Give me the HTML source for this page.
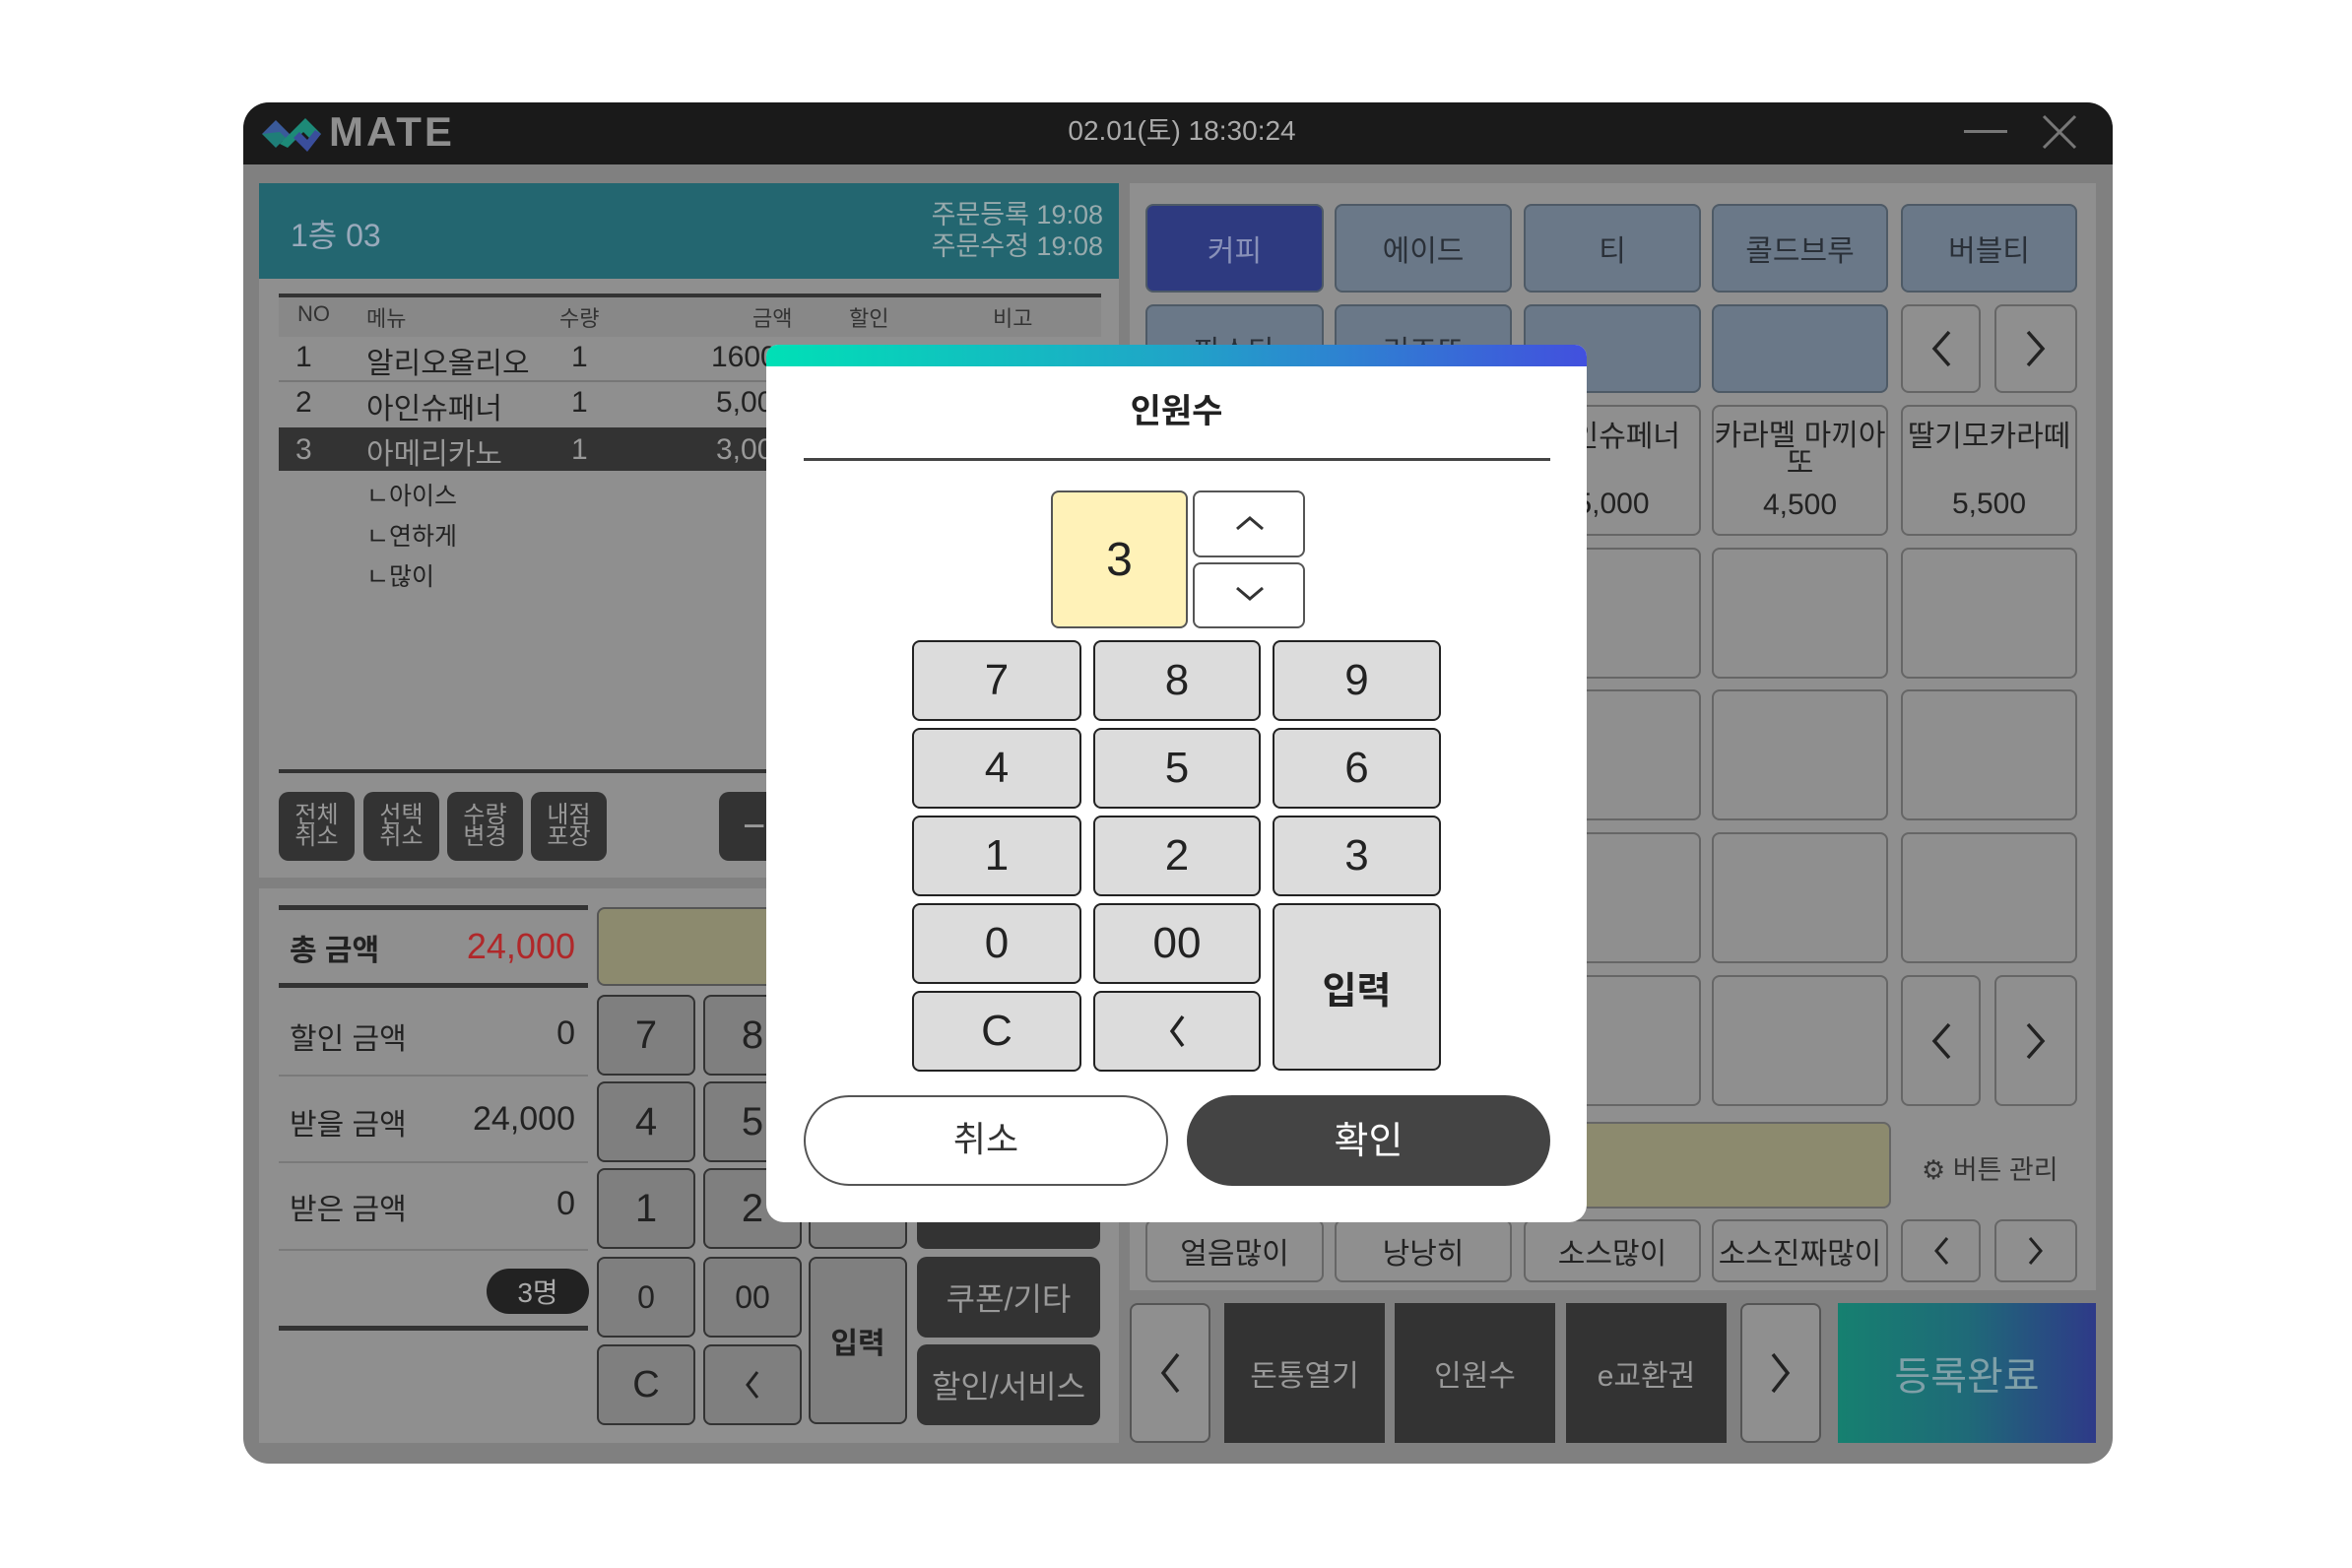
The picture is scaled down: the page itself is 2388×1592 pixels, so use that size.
<!DOCTYPE html>
<html><head><meta charset="utf-8"><style>
*{margin:0;padding:0;box-sizing:border-box}
body{width:2388px;height:1592px;background:#fff;position:relative;overflow:hidden;font-family:"Liberation Sans","Noto Sans CJK KR",sans-serif}
.a{position:absolute}
.c{display:flex;align-items:center;justify-content:center;text-align:center}
.cat{background:#6a7888;border:2px solid #4e5a66;border-radius:8px;color:#2a3038;font-size:30px}
.menu{background:#8f8f8f;border:2px solid #666;border-radius:8px;color:#222;font-size:30px}
.lk{background:#7f7f7f;border:2px solid #333;border-radius:8px;color:#222;font-size:40px}
.dk{background:#333;border-radius:10px;color:#999;font-size:32px}
.pk{background:#dcdcdc;border:2px solid #222;border-radius:8px;color:#222;font-size:44px}
.row{font-size:30px;color:#222}
.sum{font-size:30px;color:#222}
</style></head><body>
<div class="a" style="left:247px;top:104px;width:1898px;height:1382px;background:#808080;border-radius:26px;overflow:hidden">
 <div class="a" style="left:0;top:0;width:1898px;height:63px;background:#1a1a1a"></div>
</div>
<svg class="a" style="left:262px;top:113px" width="68" height="46" viewBox="0 0 68 46">
 <path d="M4 23 L18 9 L34 25 L28 31 Z" fill="#3a5a9a"/>
 <path d="M4 23 L18 37 L28 27 L22 21 Z" fill="#1f7e78"/>
 <path d="M22 33 L48 7 L64 23 L56 31 L46 21 L30 37 Z" fill="#1d8a78"/>
 <path d="M36 27 L50 41 L64 23 L58 19 L50 29 L42 21 Z" fill="#3a4e9c"/>
</svg>
<div class="a" style="left:334px;top:106px;font-size:42px;font-weight:bold;color:#8e8e8e;letter-spacing:3px;line-height:56px">MATE</div>
<div class="a" style="left:1000px;top:113px;width:400px;text-align:center;font-size:28px;color:#aaa;line-height:40px">02.01(토) 18:30:24</div>
<div class="a" style="left:1994px;top:132px;width:44px;height:3px;background:#777"></div>
<svg class="a" style="left:2072px;top:115px" width="38" height="38"><path d="M3 3L35 35M35 3L3 35" stroke="#777" stroke-width="3"/></svg>

<div class="a" style="left:263px;top:186px;width:873px;height:705px;background:#8f8f8f"></div>
<div class="a" style="left:263px;top:186px;width:873px;height:97px;background:#236670"></div>
<div class="a" style="left:295px;top:214px;font-size:32px;color:#9ab">1층 03</div>
<div class="a" style="left:880px;top:202px;width:240px;text-align:right;font-size:27px;color:#98aaad;line-height:32px">주문등록 19:08<br>주문수정 19:08</div>
<div class="a" style="left:283px;top:298px;width:835px;height:44px;background:#888;border-top:4px solid #333"></div>
<div class="a" style="left:302px;top:306px;font-size:22px;color:#333">NO</div>
<div class="a" style="left:372px;top:306px;font-size:22px;color:#333">메뉴</div>
<div class="a" style="left:568px;top:306px;font-size:22px;color:#333">수량</div>
<div class="a" style="left:764px;top:306px;font-size:22px;color:#333">금액</div>
<div class="a" style="left:862px;top:306px;font-size:22px;color:#333">할인</div>
<div class="a" style="left:1008px;top:306px;font-size:22px;color:#333">비고</div>
<div class="a" style="left:283px;top:386px;width:835px;height:2px;background:#777"></div>
<div class="a" style="left:283px;top:434px;width:835px;height:44px;background:#333"></div>
<div class="a row" style="left:300px;top:346px">1</div><div class="a row" style="left:372px;top:344px">알리오올리오</div><div class="a row" style="left:580px;top:346px">1</div><div class="a row" style="left:722px;top:346px">1600</div>
<div class="a row" style="left:300px;top:392px">2</div><div class="a row" style="left:372px;top:390px">아인슈패너</div><div class="a row" style="left:580px;top:392px">1</div><div class="a row" style="left:727px;top:392px">5,000</div>
<div class="a row" style="left:300px;top:440px;color:#999">3</div><div class="a row" style="left:372px;top:436px;color:#999">아메리카노</div><div class="a row" style="left:580px;top:440px;color:#999">1</div><div class="a row" style="left:727px;top:440px;color:#999">3,000</div>
<div class="a" style="left:372px;top:484px;font-size:25px;color:#222;line-height:41px">ㄴ아이스<br>ㄴ연하게<br>ㄴ많이</div>
<div class="a" style="left:283px;top:781px;width:835px;height:4px;background:#333"></div>
<div class="a dk c" style="left:283px;top:804px;width:77px;height:70px;font-size:24px;line-height:22px">전체<br>취소</div>
<div class="a dk c" style="left:369px;top:804px;width:77px;height:70px;font-size:24px;line-height:22px">선택<br>취소</div>
<div class="a dk c" style="left:454px;top:804px;width:77px;height:70px;font-size:24px;line-height:22px">수량<br>변경</div>
<div class="a dk c" style="left:539px;top:804px;width:77px;height:70px;font-size:24px;line-height:22px">내점<br>포장</div>
<div class="a dk c" style="left:730px;top:804px;width:100px;height:70px;font-size:40px;justify-content:flex-start;padding-left:24px">−</div>

<div class="a" style="left:263px;top:902px;width:873px;height:563px;background:#8f8f8f"></div>
<div class="a" style="left:283px;top:919px;width:314px;height:5px;background:#333"></div>
<div class="a" style="left:283px;top:998px;width:314px;height:5px;background:#333"></div>
<div class="a sum" style="left:294px;top:940px;font-weight:bold">총 금액</div>
<div class="a" style="left:420px;top:940px;width:164px;text-align:right;font-size:36px;color:#b0282a">24,000</div>
<div class="a sum" style="left:294px;top:1030px">할인 금액</div><div class="a" style="left:484px;top:1030px;width:100px;text-align:right;font-size:34px;color:#222">0</div>
<div class="a" style="left:283px;top:1091px;width:314px;height:2px;background:#7a7a7a"></div>
<div class="a sum" style="left:294px;top:1117px">받을 금액</div><div class="a" style="left:420px;top:1117px;width:164px;text-align:right;font-size:34px;color:#222">24,000</div>
<div class="a" style="left:283px;top:1179px;width:314px;height:2px;background:#7a7a7a"></div>
<div class="a sum" style="left:294px;top:1203px">받은 금액</div><div class="a" style="left:484px;top:1203px;width:100px;text-align:right;font-size:34px;color:#222">0</div>
<div class="a" style="left:283px;top:1268px;width:314px;height:2px;background:#7a7a7a"></div>
<div class="a c" style="left:494px;top:1288px;width:104px;height:46px;border-radius:23px;background:#222;color:#aaa;font-size:28px">3명</div>
<div class="a" style="left:283px;top:1346px;width:314px;height:5px;background:#333"></div>
<div class="a" style="left:606px;top:921px;width:230px;height:80px;background:#8c8a6e;border:2px solid #555;border-radius:8px"></div>
<div class="a lk c" style="left:606px;top:1010px;width:100px;height:82px">7</div>
<div class="a lk c" style="left:714px;top:1010px;width:100px;height:82px">8</div>
<div class="a lk c" style="left:606px;top:1098px;width:100px;height:82px">4</div>
<div class="a lk c" style="left:714px;top:1098px;width:100px;height:82px">5</div>
<div class="a lk c" style="left:606px;top:1186px;width:100px;height:82px">1</div>
<div class="a lk c" style="left:714px;top:1186px;width:100px;height:82px">2</div>
<div class="a lk c" style="left:821px;top:1186px;width:100px;height:82px"></div>
<div class="a lk c" style="left:606px;top:1276px;width:100px;height:82px;font-size:32px">0</div>
<div class="a lk c" style="left:714px;top:1276px;width:100px;height:82px;font-size:32px">00</div>
<div class="a lk c" style="left:821px;top:1276px;width:100px;height:170px;font-size:30px;font-weight:bold">입력</div>
<div class="a lk c" style="left:606px;top:1365px;width:100px;height:82px;font-size:38px">C</div>
<div class="a lk c" style="left:714px;top:1365px;width:100px;height:82px"><svg width="16" height="30"><path d="M13 2L3 15L13 28" stroke="#222" stroke-width="3" fill="none"/></svg></div>
<div class="a dk c" style="left:931px;top:1186px;width:186px;height:82px"></div>
<div class="a dk c" style="left:931px;top:1276px;width:186px;height:82px">쿠폰/기타</div>
<div class="a dk c" style="left:931px;top:1365px;width:186px;height:82px">할인/서비스</div>

<div class="a" style="left:1147px;top:186px;width:981px;height:1124px;background:#8f8f8f"></div>
<div class="a cat c" style="left:1163px;top:207px;width:181px;height:90px;background:#2e3a80;color:#8890b8">커피</div>
<div class="a cat c" style="left:1355px;top:207px;width:180px;height:90px">에이드</div>
<div class="a cat c" style="left:1547px;top:207px;width:180px;height:90px">티</div>
<div class="a cat c" style="left:1738px;top:207px;width:179px;height:90px">콜드브루</div>
<div class="a cat c" style="left:1930px;top:207px;width:179px;height:90px">버블티</div>
<div class="a cat c" style="left:1163px;top:309px;width:181px;height:90px">파스타</div>
<div class="a cat c" style="left:1355px;top:309px;width:180px;height:90px">리조또</div>
<div class="a cat" style="left:1547px;top:309px;width:180px;height:90px"></div>
<div class="a cat" style="left:1738px;top:309px;width:179px;height:90px"></div>
<div class="a menu c" style="left:1930px;top:309px;width:81px;height:90px"><svg width="22" height="40"><path d="M19 3L4 20L19 37" stroke="#222" stroke-width="3.5" fill="none"/></svg></div>
<div class="a menu c" style="left:2025px;top:309px;width:84px;height:90px"><svg width="22" height="40"><path d="M3 3L18 20L3 37" stroke="#222" stroke-width="3.5" fill="none"/></svg></div>
<div class="a menu c" style="left:1547px;top:411px;width:180px;height:133px;flex-direction:column;line-height:34px">아인슈페너<br><br>5,000</div>
<div class="a menu c" style="left:1738px;top:411px;width:179px;height:133px;flex-direction:column;line-height:28px">카라멜 마끼아<br>또<div style="margin-top:14px">4,500</div></div>
<div class="a menu c" style="left:1930px;top:411px;width:179px;height:133px;line-height:34px">딸기모카라떼<br><br>5,500</div>
<div class="a menu" style="left:1547px;top:556px;width:180px;height:133px"></div>
<div class="a menu" style="left:1738px;top:556px;width:179px;height:133px"></div>
<div class="a menu" style="left:1930px;top:556px;width:179px;height:133px"></div>
<div class="a menu" style="left:1547px;top:700px;width:180px;height:133px"></div>
<div class="a menu" style="left:1738px;top:700px;width:179px;height:133px"></div>
<div class="a menu" style="left:1930px;top:700px;width:179px;height:133px"></div>
<div class="a menu" style="left:1547px;top:845px;width:180px;height:133px"></div>
<div class="a menu" style="left:1738px;top:845px;width:179px;height:133px"></div>
<div class="a menu" style="left:1930px;top:845px;width:179px;height:133px"></div>
<div class="a menu" style="left:1547px;top:990px;width:180px;height:133px"></div>
<div class="a menu" style="left:1738px;top:990px;width:179px;height:133px"></div>
<div class="a menu c" style="left:1930px;top:990px;width:81px;height:133px"><svg width="22" height="40"><path d="M19 3L4 20L19 37" stroke="#222" stroke-width="3.5" fill="none"/></svg></div>
<div class="a menu c" style="left:2025px;top:990px;width:84px;height:133px"><svg width="22" height="40"><path d="M3 3L18 20L3 37" stroke="#222" stroke-width="3.5" fill="none"/></svg></div>
<div class="a" style="left:1400px;top:1139px;width:520px;height:88px;background:#8c8a6e;border:2px solid #666;border-radius:8px"></div>
<div class="a" style="left:1951px;top:1166px;font-size:27px;color:#333">⚙ 버튼 관리</div>
<div class="a menu c" style="left:1163px;top:1238px;width:181px;height:64px">얼음많이</div>
<div class="a menu c" style="left:1355px;top:1238px;width:180px;height:64px">낭낭히</div>
<div class="a menu c" style="left:1547px;top:1238px;width:180px;height:64px">소스많이</div>
<div class="a menu c" style="left:1738px;top:1238px;width:179px;height:64px">소스진짜많이</div>
<div class="a menu c" style="left:1930px;top:1238px;width:81px;height:64px"><svg width="18" height="30"><path d="M15 2L4 15L15 28" stroke="#222" stroke-width="3" fill="none"/></svg></div>
<div class="a menu c" style="left:2025px;top:1238px;width:84px;height:64px"><svg width="18" height="30"><path d="M3 2L14 15L3 28" stroke="#222" stroke-width="3" fill="none"/></svg></div>
<div class="a menu c" style="left:1147px;top:1323px;width:82px;height:142px;border-color:#555"><svg width="22" height="44"><path d="M19 3L4 22L19 41" stroke="#222" stroke-width="3.5" fill="none"/></svg></div>
<div class="a c" style="left:1243px;top:1323px;width:163px;height:142px;background:#333;color:#999;font-size:30px">돈통열기</div>
<div class="a c" style="left:1416px;top:1323px;width:163px;height:142px;background:#333;color:#999;font-size:30px">인원수</div>
<div class="a c" style="left:1590px;top:1323px;width:163px;height:142px;background:#333;color:#999;font-size:30px">e교환권</div>
<div class="a menu c" style="left:1767px;top:1323px;width:82px;height:142px;border-color:#555"><svg width="22" height="44"><path d="M3 3L18 22L3 41" stroke="#222" stroke-width="3.5" fill="none"/></svg></div>
<div class="a c" style="left:1866px;top:1323px;width:262px;height:142px;background:linear-gradient(90deg,#168070,#1f6a78 50%,#2e3a88);color:#7fa0a8;font-size:40px">등록완료</div>

<div class="a" style="left:778px;top:350px;width:833px;height:891px;background:#fff;border-radius:12px 12px 18px 18px;overflow:hidden">
 <div style="height:22px;background:linear-gradient(90deg,#00e0b6,#20a4c8 50%,#4250de)"></div>
</div>
<div class="a" style="left:778px;top:390px;width:833px;text-align:center;font-size:34px;font-weight:bold;color:#222">인원수</div>
<div class="a" style="left:816px;top:465px;width:758px;height:3px;background:#444"></div>
<div class="a c" style="left:1067px;top:498px;width:139px;height:140px;background:#fff2b8;border:2px solid #555;border-radius:8px;font-size:48px;color:#222">3</div>
<div class="a" style="left:1211px;top:498px;width:114px;height:68px;border:2px solid #555;border-radius:8px;background:#fff"></div>
<svg class="a" style="left:1253px;top:522px" width="32" height="18"><path d="M3 15L16 4L29 15" stroke="#333" stroke-width="3" fill="none"/></svg>
<div class="a" style="left:1211px;top:571px;width:114px;height:67px;border:2px solid #555;border-radius:8px;background:#fff"></div>
<svg class="a" style="left:1253px;top:594px" width="32" height="18"><path d="M3 3L16 14L29 3" stroke="#333" stroke-width="3" fill="none"/></svg>
<div class="a pk c" style="left:926px;top:650px;width:172px;height:82px">7</div>
<div class="a pk c" style="left:1110px;top:650px;width:170px;height:82px">8</div>
<div class="a pk c" style="left:1292px;top:650px;width:171px;height:82px">9</div>
<div class="a pk c" style="left:926px;top:739px;width:172px;height:82px">4</div>
<div class="a pk c" style="left:1110px;top:739px;width:170px;height:82px">5</div>
<div class="a pk c" style="left:1292px;top:739px;width:171px;height:82px">6</div>
<div class="a pk c" style="left:926px;top:828px;width:172px;height:82px">1</div>
<div class="a pk c" style="left:1110px;top:828px;width:170px;height:82px">2</div>
<div class="a pk c" style="left:1292px;top:828px;width:171px;height:82px">3</div>
<div class="a pk c" style="left:926px;top:917px;width:172px;height:82px">0</div>
<div class="a pk c" style="left:1110px;top:917px;width:170px;height:82px">00</div>
<div class="a pk c" style="left:1292px;top:917px;width:171px;height:170px;font-size:38px;font-weight:bold">입력</div>
<div class="a pk c" style="left:926px;top:1006px;width:172px;height:82px">C</div>
<div class="a pk c" style="left:1110px;top:1006px;width:170px;height:82px"><svg width="18" height="36"><path d="M15 3L4 18L15 33" stroke="#222" stroke-width="3.5" fill="none"/></svg></div>
<div class="a c" style="left:816px;top:1112px;width:370px;height:92px;border:2px solid #555;border-radius:46px;background:#fff;font-size:36px;color:#333;padding-bottom:8px">취소</div>
<div class="a c" style="left:1205px;top:1112px;width:369px;height:92px;border-radius:46px;background:#444;font-size:38px;color:#fff;padding-bottom:8px">확인</div>
</body></html>
